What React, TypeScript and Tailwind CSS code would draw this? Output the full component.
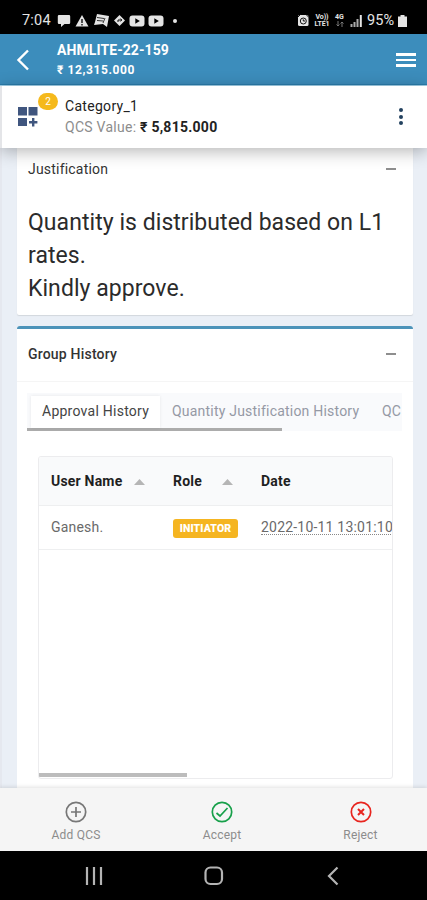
import type { ReactNode } from "react";

const tabs = ["Approval History", "Quantity Justification History", "QC"];

function StatusBar() {
  return (
    <div className="flex h-[34px] shrink-0 items-center bg-black pt-[7px] pr-[20px] pl-[22px] text-[#e4e4e4]">
      <span className="w-[35px] text-[14.5px] leading-4 tracking-[0.2px]">7:04</span>
      <svg width="14" height="14" viewBox="0 0 14 14" className="shrink-0" fill="currentColor">
        <path d="M2 1h10a1.200 1.200 0 0 1 1.200 1.200v6.600A1.200 1.200 0 0 1 12 10H7.500L4 13v-3H2A1.200 1.200 0 0 1 .8 8.800V2.200A1.200 1.200 0 0 1 2 1z" />
      </svg>
      <svg width="14" height="14" viewBox="0 0 14 14" className="ml-[4px] shrink-0">
        <path d="M7 1l6.500 11.500h-13z" fill="currentColor" />
        <path d="M7 5v4M7 10v1.500" stroke="#000" strokeWidth="1.300" />
      </svg>
      <svg width="17" height="15" viewBox="0 0 17 15" className="ml-[4px] shrink-0">
        <path d="M4 1l12 2-2 11-4-3-9 1 1-3z" fill="currentColor" />
        <path d="M4 4.500l7 1M4 7.500l6 .5M12 5l-2 5" stroke="#333" strokeWidth="1" fill="none" />
      </svg>
      <svg width="13" height="13" viewBox="0 0 13 13" className="ml-[3px] shrink-0">
        <path d="M6.500 1L12 6.500 6.500 12 1 6.500z" fill="currentColor" />
        <path d="M5 8V6h3.500M7.300 4.500L8.800 6 7.300 7.500" stroke="#111" strokeWidth="1" fill="none" />
      </svg>
      {["a", "b"].map((k) => (
        <svg key={k} width="16" height="12" viewBox="0 0 16 12" className="ml-[3px] shrink-0">
          <rect x=".5" y=".5" width="15" height="11" rx="3" fill="currentColor" />
          <path d="M6.300 3.300v5.400L10.800 6z" fill="#000" />
        </svg>
      ))}
      <span className="ml-[9px] size-[4px] rounded-full bg-[#e4e4e4]" />
      <div className="ml-auto flex items-center">
        <svg width="13" height="13" viewBox="0 0 13 13" className="shrink-0">
          <rect x="1" y="1" width="10.500" height="11" rx="1.500" fill="currentColor" />
          <circle cx="6.300" cy="7" r="3" fill="none" stroke="#111" strokeWidth="1" />
          <path d="M6.300 5.300V7H8M.5 3.500l3-3M12 3.500l-3-3" stroke="#111" fill="none" />
        </svg>
        <span className="ml-[4px] flex w-[16px] flex-col items-center text-[7px] font-bold tracking-[-0.1px]">
          <span className="leading-[7px]">Vo))</span>
          <span className="leading-[7px]">LTE1</span>
        </span>
        <span className="ml-[4px] flex w-[11px] flex-col items-center">
          <span className="text-[7px] leading-[7px] font-bold">4G</span>
          <svg width="8" height="6" viewBox="0 0 8 6" fill="none" stroke="#777">
            <path d="M2 0v5M.5 3.500L2 5l1.500-1.500M6 6V1M4.500 2.500L6 1l1.500 1.500" />
          </svg>
        </span>
        <svg width="13" height="12" viewBox="0 0 13 12" className="ml-[5px] shrink-0">
          <path d="M1.500 9v3M4.500 7v5M7.500 4v8" stroke="#aaa" strokeWidth="2" />
          <path d="M10.800 0v12" stroke="currentColor" strokeWidth="2" />
        </svg>
        <span className="ml-[4px] w-[31px] text-[14.5px] leading-4 tracking-[0.1px]">95%</span>
        <svg width="9" height="12" viewBox="0 0 9 12" className="shrink-0" fill="currentColor">
          <path d="M2.500 0h4v1.500H9V12H0V1.500h2.500z" />
        </svg>
      </div>
    </div>
  );
}

function AppHeader() {
  return (
    <header className="flex h-[52px] shrink-0 border-b border-[#a3d2ea] bg-[#3c8dbc] text-white shadow-[inset_0_-1px_0_#2a7dac]">
      <svg width="14" height="22" viewBox="0 0 14 22" className="mt-[15px] ml-[16px]" fill="none" stroke="currentColor" strokeWidth="2.400">
        <path d="M12 1.500L2.500 11 12 20.500" />
      </svg>
      <div className="ml-[27px] pt-[7px] font-bold">
        <div className="text-[14px] leading-[18px] tracking-[0.08px]">AHMLITE-22-159</div>
        <div className="mt-[2px] text-[12px] leading-[18px] tracking-[0.6px]">₹ 12,315.000</div>
      </div>
      <div className="mt-[19px] mr-[11px] ml-auto flex flex-col gap-[3px]">
        <span className="h-[2.500px] w-[20px] bg-white" />
        <span className="h-[2.500px] w-[20px] bg-white" />
        <span className="h-[2.500px] w-[20px] bg-white" />
      </div>
    </header>
  );
}

function CategoryBar() {
  return (
    <div className="z-10 flex h-[62px] shrink-0 border-l-2 border-[#e4e5e8] bg-white shadow-[0_3px_16px_rgba(0,0,0,0.3)]">
      <div className="relative mt-[21px] ml-[16px] h-[20px] w-[20px]">
        <svg width="20" height="20" viewBox="0 0 20 20" fill="#40567f">
          <path d="M0 0h9v8.500H0zM10.500 0h9v8.500h-9zM0 11h9v8H0zM14 11h2.400v3h3v2.400h-3v3H14v-3h-3V14h3z" />
        </svg>
        <span className="absolute -top-[14px] left-[20px] flex h-[17px] w-[20px] items-center justify-center rounded-full bg-[#f5b91c] text-[10px] text-white">
          2
        </span>
      </div>
      <div className="ml-[27px] pt-[10px] text-[14px] leading-[21px]">
        <div className="tracking-[0.3px] text-[#222]">Category_1</div>
        <div className="tracking-[0.26px] text-[#8d8d8d]">
          QCS Value: <b className="text-[#222]">₹ 5,815.000</b>
        </div>
      </div>
      <div className="mt-[22px] mr-[24px] ml-auto flex flex-col gap-[2.500px]">
        <span className="size-[4px] rounded-full bg-[#23415f]" />
        <span className="size-[4px] rounded-full bg-[#23415f]" />
        <span className="size-[4px] rounded-full bg-[#23415f]" />
      </div>
    </div>
  );
}

function Minus() {
  return <span className="mb-[1px] h-[2px] w-[10px] bg-[#8e8e8e]" />;
}

function SortArrow() {
  return (
    <svg width="11" height="6" viewBox="0 0 11 6" className="mt-[2px] shrink-0" fill="#b5b5b5">
      <path d="M5.500 0L11 6H0z" />
    </svg>
  );
}

function ApprovalTable() {
  return (
    <div className="ml-[21px] flex h-[323px] w-[355px] flex-col overflow-hidden rounded-[3px] border border-[#ececee]">
      <div className="flex h-[49px] shrink-0 items-center border-b border-[#eeeff0] bg-[#f9fafb] pl-[12px] text-[14px] font-bold text-[#1f1f1f]">
        <span className="w-[83px] tracking-[0.2px]">User Name</span>
        <SortArrow />
        <span className="ml-[28px] w-[49px] tracking-[0.2px]">Role</span>
        <SortArrow />
        <span className="ml-[28px] tracking-[0.2px]">Date</span>
      </div>
      <div className="flex h-[44px] shrink-0 border-b border-[#eeeff0] pl-[12px] text-[14px] text-[#6a6a6a]">
        <span className="w-[122px] shrink-0 pt-[11px] leading-[20px] tracking-[0.2px]">Ganesh.</span>
        <span className="mt-[13px] flex h-[19px] w-[65px] shrink-0 items-center justify-center rounded-[3px] bg-[#f5b521] text-[10.5px] font-black tracking-[0.1px] text-white">
          INITIATOR
        </span>
        <span className="mt-[13px] ml-[23px] h-[16px] shrink-0 border-b border-dotted border-[#888] leading-[16px] tracking-[0.2px] whitespace-nowrap">
          2022-10-11 13:01:10
        </span>
      </div>
      <div className="mt-auto mb-[1px] h-[4px] w-[148px] shrink-0 bg-[#bcbcbc]" />
    </div>
  );
}

function FooterAction({ label, children, className }: { label: string; children: ReactNode; className: string }) {
  return (
    <div className={className}>
      <svg width="22" height="22" viewBox="0 0 22 22" fill="none" stroke="currentColor" strokeWidth="1.700">
        <circle cx="11" cy="11" r="9.700" />
        {children}
      </svg>
      <span className="mt-[4px] text-[12px] leading-[16px] tracking-[0.2px] text-[#8c8c8c]">{label}</span>
    </div>
  );
}

export default function App() {
  return (
    <div className="flex h-[900px] w-[427px] flex-col overflow-hidden bg-[#eaeff6] font-[Roboto,'Liberation_Sans',sans-serif]">
      <StatusBar />
      <AppHeader />
      <CategoryBar />

      <main className="flex h-[640px] shrink-0 flex-col overflow-hidden border-l-2 border-[#e5e8ef] pr-[14px] pl-[15px]">
        <section className="h-[167px] shrink-0 rounded-b-[2px] bg-white shadow-[0_1px_1px_rgba(0,0,0,0.1)]">
          <div className="flex h-[43px] items-center justify-between pr-[17px] pl-[11px]">
            <h2 className="text-[14px] tracking-[0.2px] text-[#333]">Justification</h2>
            <Minus />
          </div>
          <p className="pt-[15px] pl-[11px] text-[23px] leading-[33px] tracking-[0.05px] text-[#2b2b2b]">
            Quantity is distributed based on L1
            <br />
            rates.
            <br />
            Kindly approve.
          </p>
        </section>

        <section className="mt-[11px] h-[470px] shrink-0 rounded-t-[3px] border-t-[3px] border-[#4c93b9] bg-white">
          <div className="flex h-[53px] items-center justify-between border-b border-[#f5f5f5] pr-[17px] pb-[1px] pl-[11px]">
            <h2 className="text-[14px] font-medium tracking-[0.2px] text-[#333]">Group History</h2>
            <Minus />
          </div>
          <div className="mt-[11px] ml-[10px] h-[38px] w-[375px] overflow-hidden bg-[#f9fafc]">
            <div className="flex h-[35px] items-center text-[14px] whitespace-nowrap text-[#9599a5]">
              <span className="mt-[2px] ml-[4px] flex h-[32px] w-[129px] items-center bg-white pl-[11px] tracking-[0.25px] text-[#444] shadow-[0_0_3px_rgba(0,0,0,0.08)]">
                {tabs[0]}
              </span>
              <span className="mt-[2px] ml-[12px] w-[188px] tracking-[0.21px]">{tabs[1]}</span>
              <span className="mt-[2px] ml-[22px]">{tabs[2]}</span>
            </div>
            <div className="h-[3px] w-[255px] bg-[#acacac]" />
          </div>
          <div className="h-[25px]" />
          <ApprovalTable />
        </section>
      </main>

      <footer className="z-10 flex h-[63px] shrink-0 bg-[#f5f5f5] pt-[13px] shadow-[0_-1px_4px_rgba(0,0,0,0.12)]">
        <FooterAction label="Add QCS" className="flex w-[152px] flex-col items-center text-[#777]">
          <path d="M11 6v10M6 11h10" />
        </FooterAction>
        <FooterAction label="Accept" className="flex w-[140px] flex-col items-center text-[#17a04a]">
          <path d="M5.500 12l3.500 3 7.500-8" />
        </FooterAction>
        <FooterAction label="Reject" className="flex w-[135px] flex-col items-center pl-[2px] text-[#e8251f]">
          <path d="M8 8l6 6M14 8l-6 6" strokeWidth="2" />
        </FooterAction>
      </footer>

      <nav className="flex h-[49px] shrink-0 items-start bg-black pt-[15px] text-[#b4b4b4]">
        <svg width="18" height="20" viewBox="0 0 18 20" className="ml-[85px]" stroke="currentColor" strokeWidth="2.200">
          <path d="M2 1v18M9 1v18M16 1v18" />
        </svg>
        <svg width="20" height="20" viewBox="0 0 20 20" className="ml-[101px]" fill="none" stroke="currentColor" strokeWidth="2.200">
          <rect x="1.500" y="1.500" width="16.500" height="16.500" rx="5" />
        </svg>
        <svg width="12" height="20" viewBox="0 0 12 20" className="ml-[103px]" fill="none" stroke="currentColor" strokeWidth="2.200">
          <path d="M10.500 1.500L2 10l8.500 8.500" />
        </svg>
      </nav>
    </div>
  );
}
